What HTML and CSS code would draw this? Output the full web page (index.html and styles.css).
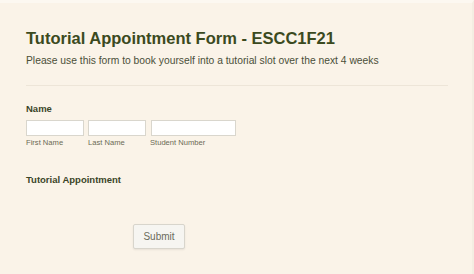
FILE: index.html
```html
<!DOCTYPE html>
<html>
<head>
<meta charset="utf-8">
<link rel="stylesheet" href="styles.css">
</head>
<body>
<div class="page">
  <div class="header">
    <h1 class="title">Tutorial Appointment Form - ESCC1F21</h1>
    <p class="subtitle">Please use this form to book yourself into a tutorial slot over the next 4 weeks</p>
  </div>
  <div class="divider"></div>
  <div class="field">
    <div class="label">Name</div>
    <div class="inputs">
      <div class="sub"><div class="box w1"></div><span>First Name</span></div>
      <div class="sub"><div class="box w1"></div><span>Last Name</span></div>
      <div class="sub"><div class="box w2"></div><span>Student Number</span></div>
    </div>
  </div>
  <div class="field appt">
    <div class="label">Tutorial Appointment</div>
  </div>
  <div class="actions">
    <button class="submit">Submit</button>
  </div>
</div>
</body>
</html>
```
FILE: styles.css
```css
html, body { margin: 0; padding: 0; }
body {
  width: 474px; height: 274px; overflow: hidden;
  background: #faf3e8;
  font-family: "Liberation Sans", Arial, sans-serif;
}
.page {
  height: 274px;
  box-sizing: border-box;
  padding: 25px 26px 0 26px;
  border-top: 3px solid #fcf8f1;
  border-right: 2px solid #f4ede2;
}
.title {
  margin: 0;
  font-size: 16.5px;
  font-weight: bold;
  color: #3b4a1e;
  line-height: 20px;
}
.subtitle {
  margin: 7px 0 0 0;
  font-size: 10.3px;
  color: #4a4f38;
  line-height: 12px;
}
.divider {
  margin-top: 18px;
  width: 422px;
  height: 1px;
  background: #ede5d8;
}
.field { margin-top: 17px; }
.label {
  font-size: 9.5px;
  font-weight: bold;
  color: #3b4527;
  line-height: 12px;
}
.inputs { display: flex; gap: 4px; margin-top: 5px; }
.sub { display: flex; flex-direction: column; }
.sub span { font-size: 7.6px; color: #6b6a55; margin-top: 2px; line-height: 9px; }
.box {
  height: 14px;
  background: #ffffff;
  border: 1px solid #d9d6cd;
}
.w1 { width: 56px; }
.w2 { width: 83px; margin-left: 1px; }
.appt { margin-top: 27px; }
.actions { padding-left: 107px; margin-top: 38px; }
.submit {
  width: 52px; height: 25px;
  background: #f6f5f1;
  border: 1px solid #d8d5cc;
  border-radius: 2px;
  box-shadow: 0 1px 2px rgba(0,0,0,0.08);
  font-family: "Liberation Sans", Arial, sans-serif;
  font-size: 10px;
  color: #6b6b5c;
  padding: 0;
}
```
